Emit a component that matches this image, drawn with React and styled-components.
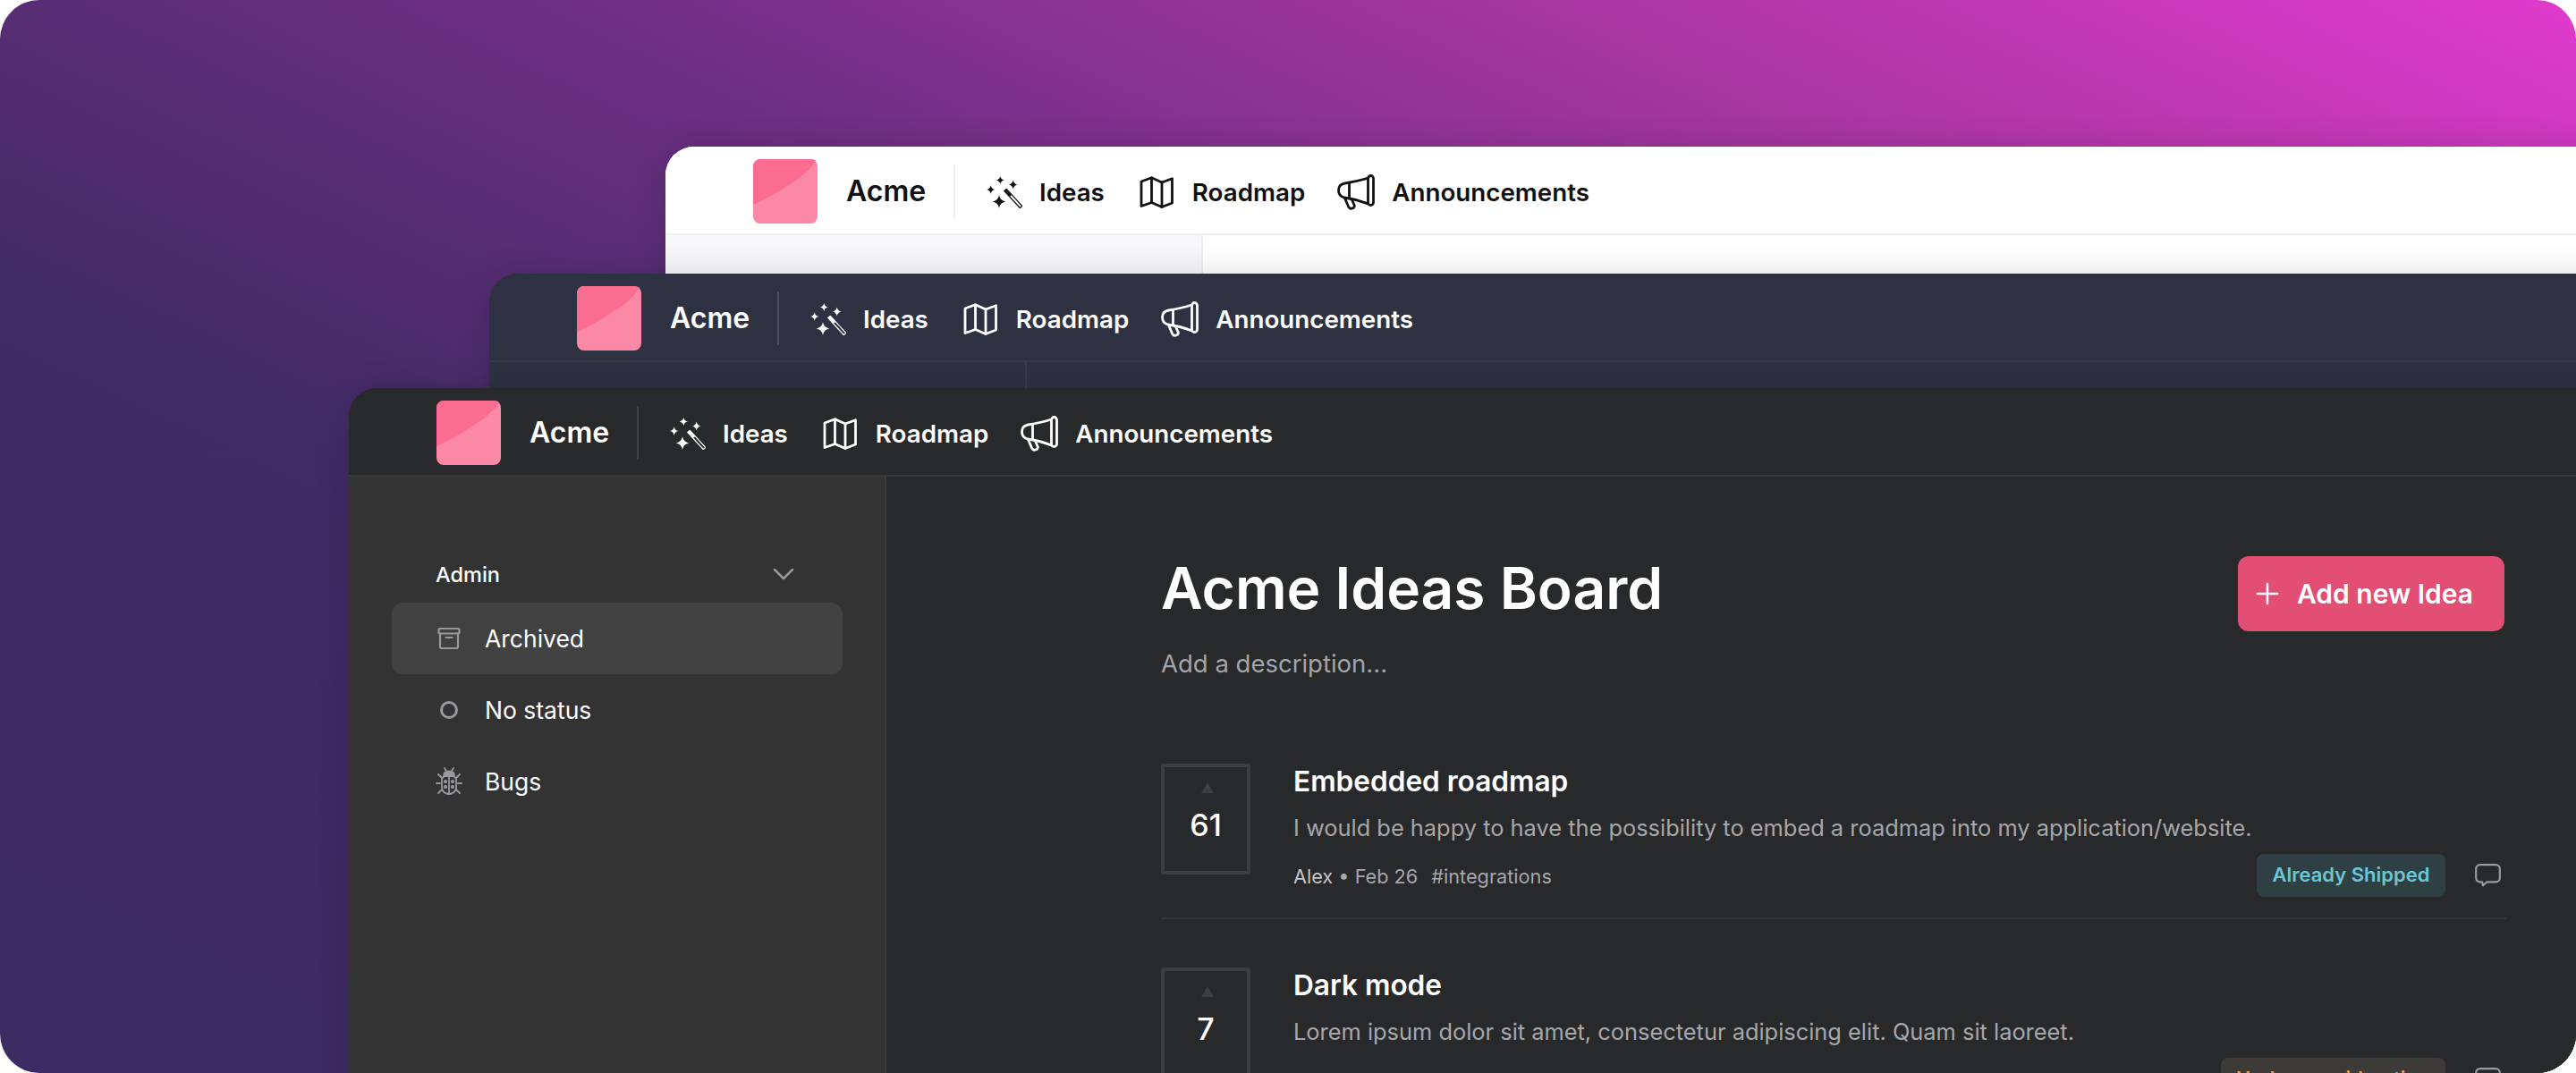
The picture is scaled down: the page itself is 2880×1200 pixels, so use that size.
import React from "react";
import styled, { createGlobalStyle } from "styled-components";
import { Plus, ChevronDown } from "lucide-react";

const GlobalStyle = createGlobalStyle`
  html, body {
    margin: 0;
    padding: 0;
    background: #fff;
  }
  * {
    box-sizing: border-box;
  }
`;

const themes = {
  light: {
    header: "#ffffff",
    line: "#ededf2",
    side: "#f8f8fa",
    main: "#ffffff",
    text: "#111113",
    divider: "#ededf0",
  },
  navy: {
    header: "#2d3142",
    line: "#383b4e",
    side: "#2d3142",
    main: "#2d3142",
    text: "#ffffff",
    divider: "#4a4d5e",
  },
  dark: {
    header: "#28292b",
    line: "#3a3b3d",
    side: "#333334",
    main: "#28292b",
    text: "#ffffff",
    divider: "#404143",
  },
};

const Stage = styled.div`
  position: relative;
  width: 2880px;
  height: 1200px;
  border-radius: 44px;
  overflow: hidden;
  font-family: Inter, "Liberation Sans", sans-serif;
  background: linear-gradient(205deg, #e03bcd 0%, #a5369f 22%, #6c2f82 42%, #3f2b64 66%, #3c2a62 100%);
`;

const Window = styled.section`
  position: absolute;
  left: ${(p) => p.$left}px;
  top: ${(p) => p.$top}px;
  width: 2600px;
  height: 1000px;
  border-radius: 32px 0 0 0;
  overflow: hidden;
  display: flex;
  flex-direction: column;
  background: ${(p) => p.$theme.main};
  box-shadow: 0 0 36px rgba(0, 0, 0, 0.14);
`;

const Header = styled.header`
  height: 99px;
  flex: none;
  display: flex;
  align-items: flex-start;
  padding: 14px 0 0 98px;
  background: ${(p) => p.$theme.header};
  border-bottom: 2px solid ${(p) => p.$theme.line};
  color: ${(p) => p.$theme.text};
`;

const LogoMark = styled.svg`
  width: 72px;
  height: 72px;
  flex: none;
`;

const Brand = styled.span`
  margin-left: 32px;
  width: 120px;
  line-height: 71px;
  font-size: 32px;
  font-weight: 600;
`;

const HeaderRule = styled.div`
  width: 2px;
  height: 60px;
  margin-top: 6px;
  background: ${(p) => p.$theme.divider};
`;

const Nav = styled.nav`
  display: flex;
  align-items: center;
  height: 72px;
  margin: 1px 0 0 35px;
`;

const NavItem = styled.a`
  display: flex;
  align-items: center;
  gap: ${(p) => p.$gap}px;
  margin-right: ${(p) => p.$after}px;
  font-size: 27.75px;
  font-weight: 600;
  color: inherit;
`;

const Body = styled.div`
  flex: 1;
  display: flex;
`;

const Sidebar = styled.aside`
  width: 601px;
  flex: none;
  padding: 87px 48px 0 48px;
  background: ${(p) => p.$theme.side};
  border-right: 2px solid ${(p) => p.$theme.line};
`;

const GroupHead = styled.div`
  display: flex;
  align-items: center;
  justify-content: space-between;
  width: 504px;
  height: 44px;
  margin-bottom: 10px;
  padding: 0 46px 0 49px;
  color: #fff;
  font-size: 23.5px;
  font-weight: 500;
  svg {
    color: #98989c;
  }
`;

const SideItem = styled.div`
  display: flex;
  align-items: center;
  gap: 25px;
  width: 504px;
  height: 80px;
  padding-left: 49px;
  border-radius: 12px;
  background: ${(p) => (p.$active ? "#414142" : "transparent")};
  color: #fff;
  font-size: 26.5px;
  svg {
    flex: none;
    color: #98989e;
  }
`;

const Content = styled.main`
  flex: 1;
  padding: 89px 0 0 307px;
  background: ${(p) => p.$theme.main};
`;

const Column = styled.div`
  width: 1504px;
`;

const TitleRow = styled.div`
  display: flex;
  align-items: flex-start;
  justify-content: space-between;
  height: 101px;
`;

const BoardTitle = styled.h1`
  margin: 0;
  color: #fff;
  font-size: 64px;
  line-height: 72px;
  font-weight: 600;
`;

const AddButton = styled.button`
  display: flex;
  align-items: center;
  gap: 14px;
  width: 298px;
  height: 84px;
  margin-right: 2px;
  padding: 0 0 0 14px;
  border: none;
  border-radius: 12px;
  background: #e24e74;
  color: #fff;
  font-family: inherit;
  font-size: 30px;
  font-weight: 600;
`;

const Description = styled.p`
  margin: 0;
  height: 131px;
  color: #a4a5a8;
  font-size: 27.5px;
  line-height: 38px;
`;

const IdeaRow = styled.article`
  display: flex;
  gap: 48px;
  height: 174px;
  margin-bottom: 54px;
  border-bottom: 2px solid #34353b;
`;

const VoteBox = styled.div`
  width: 100px;
  height: 124px;
  flex: none;
  display: flex;
  flex-direction: column;
  align-items: center;
  padding-top: 17px;
  border: 4px solid #3d3e40;
  border-radius: 3px;
  color: #fff;
  font-size: 34px;
  font-weight: 500;
`;

const VoteArrow = styled.span`
  width: 0;
  height: 0;
  margin-left: 3px;
  border-left: 7px solid transparent;
  border-right: 7px solid transparent;
  border-bottom: 12px solid #3e3f41;
`;

const VoteCount = styled.span`
  margin-top: 14px;
  line-height: 44px;
`;

const IdeaBody = styled.div`
  flex: 1;
  min-width: 0;
`;

const IdeaTitle = styled.h2`
  margin: 0;
  color: #fff;
  font-size: 31.6px;
  line-height: 40px;
  font-weight: 600;
`;

const IdeaText = styled.p`
  margin: 12px 0 0;
  color: #a6a7aa;
  font-size: 25.4px;
  line-height: 40px;
  white-space: nowrap;
`;

const MetaRow = styled.div`
  display: flex;
  align-items: center;
  margin-top: 9px;
  height: 48px;
`;

const MetaText = styled.span`
  display: flex;
  gap: 15px;
  padding-top: 2px;
  color: #a6a7aa;
  font-size: 21.7px;
`;

const Author = styled.span`
  color: #c4c5c8;
`;

const MetaRight = styled.div`
  display: flex;
  align-items: center;
  gap: 33px;
  margin: 0 6px 0 auto;
`;

const Badge = styled.span`
  display: flex;
  align-items: center;
  height: 48px;
  padding: 0 17.5px 2px;
  border-radius: 8px;
  background: ${(p) => p.$bg};
  color: ${(p) => p.$color};
  font-size: 22px;
  font-weight: 600;
  white-space: nowrap;
`;

const CommentIcon = styled.svg`
  width: 29px;
  height: 26px;
  flex: none;
  color: #9a9b9e;
`;

const Logo = () => (
  <LogoMark viewBox="0 0 72 72">
    <rect width="72" height="72" rx="8" fill="#fb88a6" />
    <path
      d="M8 0h56c3 0 5 1 6 2-8 13-22 22-35.300 30C26 38 14 45 0 51V8c0-4 4-8 8-8z"
      fill="#fb6d90"
    />
  </LogoMark>
);

// concave four point star around cx, cy
const sparkle = (cx, cy, r) => {
  const t = r * 0.16;
  return `M${cx} ${cy - r}Q${cx + t} ${cy - t} ${cx + r} ${cy}Q${cx + t} ${cy + t} ${cx} ${cy + r}Q${cx - t} ${cy + t} ${cx - r} ${cy}Q${cx - t} ${cy - t} ${cx} ${cy - r}z`;
};

const WandIcon = () => (
  <svg width="40" height="36" viewBox="0 0 40 36" fill="currentColor">
    <path d={sparkle(15.3, 4.5, 4.5)} />
    <path d={sparkle(29.7, 9.5, 5)} />
    <path d={sparkle(4.7, 15, 4.7)} />
    <path d={sparkle(14, 28.5, 7.2)} />
    <path d="M21 15.500L27 22" stroke="currentColor" strokeWidth="3" />
    <path
      d="M22.300 14.400L39.700 33.400L37.300 35.500L19.800 16.600z"
      fill="none"
      stroke="currentColor"
      strokeWidth="1.300"
      strokeLinejoin="round"
    />
  </svg>
);

const MapIcon = () => (
  <svg width="38" height="36" viewBox="0 0 38 36" fill="none" stroke="currentColor" strokeWidth="2.800" strokeLinejoin="round" strokeLinecap="round">
    <path d="M2 6L13.500 1.800L25 7L36.500 2.800V30L25 34.500L13.500 29.500L2 33.500z" />
    <path d="M13.500 1.800V29.500M25 7V34.500" />
  </svg>
);

const MegaphoneIcon = () => (
  <svg width="42" height="40" viewBox="0 0 42 40" fill="none" stroke="currentColor" strokeWidth="2.800" strokeLinejoin="round" strokeLinecap="round">
    <path d="M34.500 4C27 6.500 18 8.500 8.500 10C4 10.800 1.500 14 1.500 18C1.500 22 4 25 8 26C18 27.500 27 30 34.500 33" />
    <rect x="34.500" y="1.500" width="6" height="33" rx="3" />
    <path d="M13.500 9.500V26.500" />
    <path d="M8.500 26.500L12.500 36C13.300 38 15 38.600 17 38C19 37.400 19.800 35.800 19 34L16 27.500" />
  </svg>
);

const Chevron = () => <ChevronDown size={40} strokeWidth={1.5} />;

const ArchiveIcon = () => (
  <svg width="30" height="30" viewBox="0 0 30 30" fill="none" stroke="currentColor" strokeWidth="2.200" strokeLinejoin="round" strokeLinecap="round">
    <rect x="3.500" y="4" width="23" height="5.500" rx="1" />
    <path d="M5 9.500V24c0 1.300.8 2 2 2h16c1.200 0 2-.7 2-2V9.500M11.500 14h7" />
  </svg>
);

const CircleIcon = () => (
  <svg width="30" height="30" viewBox="0 0 30 30" fill="none" stroke="currentColor" strokeWidth="3">
    <circle cx="15" cy="15" r="8.500" />
  </svg>
);

const BugIcon = () => (
  <svg width="30" height="32" viewBox="0 0 30 32" fill="none" stroke="currentColor" strokeWidth="1.800" strokeLinecap="round">
    <path d="M10 1l2.500 4M20 1l-2.500 4M3 8l4 4M27 8l-4 4M1 18h4M29 18h-4M3 29l4-4M27 29l-4-4" />
    <path d="M9 10c0-4 3-5.500 6-5.500s6 1.500 6 5.500z" fill="currentColor" />
    <path d="M7 14c0-2 2-4 4-4h8c2 0 4 2 4 4v9c0 4-4 7-8 7s-8-3-8-7z" />
    <path d="M15 10v20" />
    <circle cx="11" cy="16" r="1.200" fill="currentColor" />
    <circle cx="19" cy="16" r="1.200" fill="currentColor" />
    <circle cx="11" cy="22" r="1.200" fill="currentColor" />
    <circle cx="19" cy="22" r="1.200" fill="currentColor" />
  </svg>
);

const Comment = () => (
  <CommentIcon viewBox="0 0 29 26" fill="none" stroke="currentColor" strokeWidth="2.200" strokeLinejoin="round">
    <path d="M5.500 1.200h18c2.400 0 4.300 1.900 4.300 4.300v10.500c0 2.400-1.900 4.300-4.300 4.300H13.500l-4.500 4-1-4H5.500c-2.400 0-4.300-1.900-4.300-4.300V5.500c0-2.400 1.900-4.300 4.300-4.300z" />
  </CommentIcon>
);

const AppHeader = ({ theme }) => (
  <Header $theme={theme}>
    <Logo />
    <Brand>Acme</Brand>
    <HeaderRule $theme={theme} />
    <Nav>
      <NavItem $gap={19} $after={39}><WandIcon />Ideas</NavItem>
      <NavItem $gap={21} $after={36}><MapIcon />Roadmap</NavItem>
      <NavItem $gap={19}><MegaphoneIcon />Announcements</NavItem>
    </Nav>
  </Header>
);

const ideas = [
  {
    votes: 61,
    title: "Embedded roadmap",
    text: "I would be happy to have the possibility to embed a roadmap into my application/website.",
    meta: { author: "Alex", date: "Feb 26", tag: "#integrations" },
    status: "Already Shipped",
    bg: "#2f4045",
    color: "#6cc5d8",
  },
  {
    votes: 7,
    title: "Dark mode",
    text: "Lorem ipsum dolor sit amet, consectetur adipiscing elit. Quam sit laoreet.",
    status: "Under consideration",
    bg: "#3d3b37",
    color: "#e8a050",
  },
];

export default function App() {
  return (
    <>
      <GlobalStyle />
      <Stage>
        <Window $left={744} $top={164} $theme={themes.light}>
          <AppHeader theme={themes.light} />
          <Body>
            <Sidebar $theme={themes.light} />
            <Content $theme={themes.light} />
          </Body>
        </Window>
        <Window $left={547} $top={306} $theme={themes.navy}>
          <AppHeader theme={themes.navy} />
          <Body>
            <Sidebar $theme={themes.navy} />
            <Content $theme={themes.navy} />
          </Body>
        </Window>
        <Window $left={390} $top={434} $theme={themes.dark}>
          <AppHeader theme={themes.dark} />
          <Body>
            <Sidebar $theme={themes.dark}>
              <GroupHead>Admin<Chevron /></GroupHead>
              <SideItem $active><ArchiveIcon />Archived</SideItem>
              <SideItem><CircleIcon />No status</SideItem>
              <SideItem><BugIcon />Bugs</SideItem>
            </Sidebar>
            <Content $theme={themes.dark}>
              <Column>
                <TitleRow>
                  <BoardTitle>Acme Ideas Board</BoardTitle>
                  <AddButton><Plus size={38} strokeWidth={1.6} />Add new Idea</AddButton>
                </TitleRow>
                <Description>Add a description...</Description>
                {ideas.map((idea) => (
                  <IdeaRow key={idea.title}>
                    <VoteBox>
                      <VoteArrow />
                      <VoteCount>{idea.votes}</VoteCount>
                    </VoteBox>
                    <IdeaBody>
                      <IdeaTitle>{idea.title}</IdeaTitle>
                      <IdeaText>{idea.text}</IdeaText>
                      <MetaRow>
                        {idea.meta && (
                          <MetaText>
                            <span><Author>{idea.meta.author}</Author> • {idea.meta.date}</span>
                            <span>{idea.meta.tag}</span>
                          </MetaText>
                        )}
                        <MetaRight>
                          <Badge $bg={idea.bg} $color={idea.color}>{idea.status}</Badge>
                          <Comment />
                        </MetaRight>
                      </MetaRow>
                    </IdeaBody>
                  </IdeaRow>
                ))}
              </Column>
            </Content>
          </Body>
        </Window>
      </Stage>
    </>
  );
}
